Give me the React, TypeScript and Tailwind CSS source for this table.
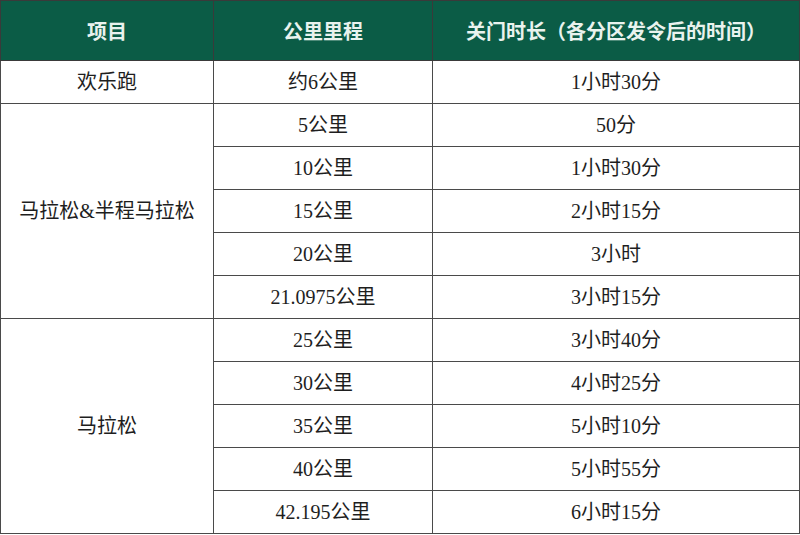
const rows: { name?: string; span?: number; dist: string; time: string }[] = [
  { name: "欢乐跑", span: 1, dist: "约6公里", time: "1小时30分" },
  { name: "马拉松&半程马拉松", span: 5, dist: "5公里", time: "50分" },
  { dist: "10公里", time: "1小时30分" },
  { dist: "15公里", time: "2小时15分" },
  { dist: "20公里", time: "3小时" },
  { dist: "21.0975公里", time: "3小时15分" },
  { name: "马拉松", span: 5, dist: "25公里", time: "3小时40分" },
  { dist: "30公里", time: "4小时25分" },
  { dist: "35公里", time: "5小时10分" },
  { dist: "40公里", time: "5小时55分" },
  { dist: "42.195公里", time: "6小时15分" },
];

export default function App() {
  return (
    <div className="w-[800px] h-[535px] bg-white overflow-hidden">
      <table
        className="w-[799px] border-collapse table-fixed text-[20px] leading-[26px] text-[#1e1e1e]"
        style={{ fontFamily: '"Liberation Serif", "Noto Sans CJK SC", serif' }}
      >
        <colgroup>
          <col className="w-[213px]" />
          <col className="w-[219px]" />
          <col className="w-[367px]" />
        </colgroup>
        <thead>
          <tr
            className="h-[60px] bg-[#0b5c46] text-[#e9f3ee]"
            style={{ fontFamily: '"Noto Sans CJK SC", sans-serif' }}
          >
            <th className="border border-[#3a3a3a] text-[20px] font-semibold">项目</th>
            <th className="border border-[#3a3a3a] text-[20px] font-semibold">公里里程</th>
            <th className="border border-[#3a3a3a] text-[20px] font-semibold whitespace-nowrap">
              关门时长（各分区发令后的时间）
            </th>
          </tr>
        </thead>
        <tbody>
          {rows.map((r, i) => (
            <tr key={i} className="h-[43px]">
              {r.name && (
                <td rowSpan={r.span} className="border border-[#4a4a4a] text-center align-middle">
                  {r.name}
                </td>
              )}
              <td className="border border-[#4a4a4a] text-center align-middle">{r.dist}</td>
              <td className="border border-[#4a4a4a] text-center align-middle">{r.time}</td>
            </tr>
          ))}
        </tbody>
      </table>
    </div>
  );
}
